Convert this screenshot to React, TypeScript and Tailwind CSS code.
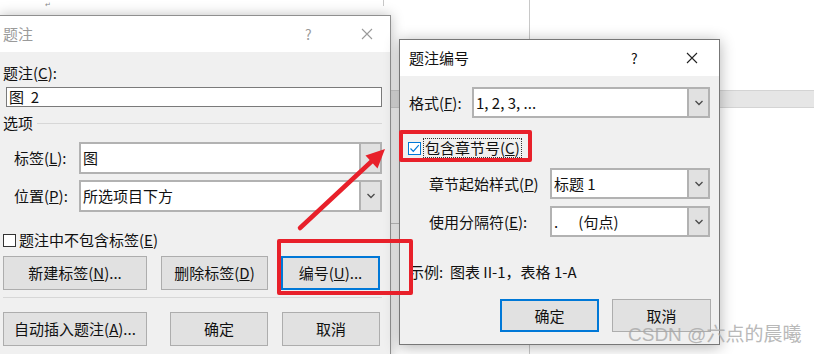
import React from "react";

const Chevron = () => (
  <svg width="10" height="6" viewBox="0 0 10 6">
    <path d="M1.5 1 L5 4.5 L8.5 1" fill="none" stroke="#4a4a4a" strokeWidth="1.3" />
  </svg>
);

const CloseX = ({ color }: { color: string }) => (
  <svg width="12" height="12" viewBox="0 0 12 12">
    <path d="M1 1 L11 11 M11 1 L1 11" fill="none" stroke={color} strokeWidth="1.1" />
  </svg>
);

const Combo = ({ text, w, h, hideChevron }: { text: React.ReactNode; w: string; h: string; hideChevron?: boolean }) => (
  <div className={`flex ${w} ${h} border-2 border-[#b2b2b2] bg-white`}>
    <div className="flex-1 flex items-center pl-[2px] whitespace-pre">{text}</div>
    <div className="w-[21px] bg-[#e1e1e1] border-l-2 border-[#b2b2b2] flex items-center justify-center">
      {hideChevron ? null : <Chevron />}
    </div>
  </div>
);

const Btn = ({ children, w, focus, h = "h-[34px]" }: { children: React.ReactNode; w: string; focus?: boolean; h?: string }) => (
  <div
    className={`${w} ${h} flex items-center justify-center bg-[#e1e1e1] ${
      focus ? "border-2 border-[#0078d7]" : "border border-[#adadad]"
    }`}
  >
    {children}
  </div>
);

export default function App() {
  return (
    <div
      className="relative w-[814px] h-[354px] bg-white overflow-hidden text-[15px] leading-[20px] text-[#111]"
      style={{ fontFamily: '"Noto Sans CJK SC", "Noto Sans", sans-serif' }}
    >
      {/* background document bits */}
      <div className="absolute left-[45px] top-0 text-[7px] leading-[8px] text-[#888]">↵</div>
      <div className="absolute left-[383px] top-0 w-px h-[6px] bg-[#c8c8c8]" />
      <div className="absolute left-[529px] top-0 w-px h-[354px] bg-[#c8c8c8]" />
      <div className="absolute left-0 top-[90px] w-[814px] h-[18px] bg-[#e6e6e6] border-y border-[#d4d4d4]" />
      <div className="absolute left-[390px] top-[223px] w-[10px] h-px bg-[#c8c8c8]" />

      {/* Left dialog: 题注 */}
      <div className="absolute left-0 top-[15px] w-[391px] h-[345px] bg-[#f0f0f0] border-t border-r border-[#8f8f8f] shadow-[0_0_12px_rgba(0,0,0,0.25)] flex flex-col">
        <div className="h-[36px] bg-white flex items-center pl-[3px] text-[#9a9a9a]">
          <span>题注</span>
          <span className="ml-[272px] text-[14px]">?</span>
          <span className="ml-[49px] flex items-center">
            <CloseX color="#9a9a9a" />
          </span>
        </div>
        <div className="flex flex-col pl-[3px] pr-[8px]">
          <div className="mt-[11px]">
            题注(<u>C</u>):
          </div>
          <div className="mt-[4px] ml-[3px] h-[20px] border border-[#7a7a7a] bg-white flex items-center pl-[2px] whitespace-pre">图  2</div>
          <div className="mt-[6px] flex items-center">
            <span>选项</span>
            <div className="flex-1 h-px bg-[#d7d7d7] ml-[4px]" />
          </div>
          <div className="mt-[9px] flex items-center">
            <div className="w-[65px] ml-[11px]">
              标签(<u>L</u>):
            </div>
            <Combo text="图" w="w-[303px]" h="h-[32px]" hideChevron />
          </div>
          <div className="mt-[6px] flex items-center">
            <div className="w-[65px] ml-[11px]">
              位置(<u>P</u>):
            </div>
            <Combo text="所选项目下方" w="w-[303px]" h="h-[32px]" />
          </div>
          <div className="mt-[18px] flex items-center">
            <div className="w-[13px] h-[13px] border border-[#333] bg-white mr-[3px]" />
            <span>
              题注中不包含标签(<u>E</u>)
            </span>
          </div>
          <div className="mt-[6px] flex items-center">
            <Btn w="w-[144px]">
              新建标签(<u>N</u>)...
            </Btn>
            <div className="ml-[14px]">
              <Btn w="w-[107px]">
                删除标签(<u>D</u>)
              </Btn>
            </div>
            <div className="ml-[13px]">
              <Btn w="w-[99px]" focus>
                编号(<u>U</u>)...
              </Btn>
            </div>
          </div>
          <div className="mt-[7px] h-px bg-[#d7d7d7]" />
          <div className="mt-[14px] flex items-center">
            <Btn w="w-[144px]">
              自动插入题注(<u>A</u>)...
            </Btn>
            <div className="ml-[23px]">
              <Btn w="w-[98px]">确定</Btn>
            </div>
            <div className="ml-[14px]">
              <Btn w="w-[98px]">取消</Btn>
            </div>
          </div>
        </div>
      </div>

      {/* Right dialog: 题注编号 */}
      <div className="absolute left-[399px] top-[39px] w-[321px] h-[306px] bg-[#f0f0f0] border border-[#777] shadow-[0_2px_14px_rgba(0,0,0,0.3)] flex flex-col">
        <div className="h-[36px] bg-white flex items-center pl-[9px]">
          <span>题注编号</span>
          <span className="ml-[162px] text-[14px]">?</span>
          <span className="ml-[48px] flex items-center">
            <CloseX color="#222" />
          </span>
        </div>
        <div className="flex flex-col pl-[9px] pr-[8px]">
          <div className="mt-[11px] flex items-center">
            <div className="w-[63px]">
              格式(<u>F</u>):
            </div>
            <Combo text="1, 2, 3, ..." w="w-[238px]" h="h-[31px]" />
          </div>
          <div className="mt-[20px] flex items-center h-[20px]">
            <div className="w-[13px] h-[13px] border border-[#0078d7] bg-white ml-[-1px] flex items-center justify-center">
              <svg width="11" height="11" viewBox="0 0 11 11">
                <path d="M1.5 5.5 L4.3 8.3 L9.8 2.2" fill="none" stroke="#0078d7" strokeWidth="1.2" />
              </svg>
            </div>
            <span className="ml-[2px] border border-dotted border-[#333] px-[1px] leading-[18px]">
              包含章节号(<u>C</u>)
            </span>
          </div>
          <div className="mt-[10px] flex items-center">
            <div className="w-[121px] ml-[20px]">
              章节起始样式(<u>P</u>)
            </div>
            <Combo text="标题 1" w="w-[160px]" h="h-[31px]" />
          </div>
          <div className="mt-[7px] flex items-center">
            <div className="w-[121px] ml-[20px]">
              使用分隔符(<u>E</u>):
            </div>
            <Combo text={".      (句点)"} w="w-[160px]" h="h-[31px]" />
          </div>
          <div className="mt-[25px]">示例:&nbsp;&nbsp;图表 II-1，表格 1-A</div>
          <div className="mt-[17px] flex justify-end gap-[13px]">
            <Btn w="w-[99px]" h="h-[33px]" focus>
              确定
            </Btn>
            <Btn w="w-[99px]" h="h-[33px]">
              取消
            </Btn>
          </div>
        </div>
      </div>

      {/* annotations */}
      <div className="absolute left-[399px] top-[130px] w-[133px] h-[32px] border-[4px] border-[#e8202a] rounded-[2px]" />
      <div className="absolute left-[277px] top-[239px] w-[136px] h-[56px] border-[4px] border-[#e8202a] rounded-[2px]" />
      <svg className="absolute left-0 top-0 pointer-events-none" width="814" height="354">
        <line x1="300" y1="228" x2="372" y2="161" stroke="#e8202a" strokeWidth="4.5" strokeLinecap="round" />
        <polygon points="385,149 377.5,168.5 365.5,155.5" fill="#e8202a" />
      </svg>

      {/* watermark */}
      <div className="absolute left-[628px] top-[321px] text-[19px] leading-[24px] text-[#a8a8a8] opacity-80 whitespace-nowrap">
        <span style={{ fontFamily: '"Liberation Sans", sans-serif' }}>CSDN @</span>六点的晨曦
      </div>
    </div>
  );
}
